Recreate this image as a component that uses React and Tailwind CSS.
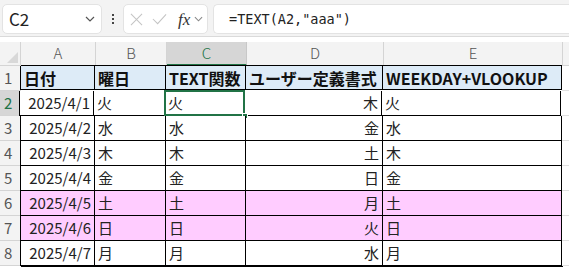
import React from "react";

const cols = [
  { key: "A", w: "w-[75px]" },
  { key: "B", w: "w-[71px]" },
  { key: "C", w: "w-[80px]" },
  { key: "D", w: "w-[137px]" },
  { key: "E", w: "w-[179px]" },
];

const rows = [
  { n: 2, a: "2025/4/1", b: "火", c: "火", d: "木", e: "火" },
  { n: 3, a: "2025/4/2", b: "水", c: "水", d: "金", e: "水" },
  { n: 4, a: "2025/4/3", b: "木", c: "木", d: "土", e: "木" },
  { n: 5, a: "2025/4/4", b: "金", c: "金", d: "日", e: "金" },
  { n: 6, a: "2025/4/5", b: "土", c: "土", d: "月", e: "土", pink: true },
  { n: 7, a: "2025/4/6", b: "日", c: "日", d: "火", e: "日", pink: true },
  { n: 8, a: "2025/4/7", b: "月", c: "月", d: "水", e: "月" },
];

const Chevron = ({ className }) => (
  <svg viewBox="0 0 10 6" className={className} fill="none" stroke="currentColor" strokeWidth="1.2">
    <path d="M1 1l4 4 4-4" />
  </svg>
);

const Toolbar = () => (
  <div className="flex h-[37px] items-start gap-0 bg-[#f3f3f3] border-b border-[#dadada] pt-[4px] pl-[2px]">
    <div className="flex h-[30px] w-[100px] items-center justify-between rounded-[5px] border border-[#e3e3e3] bg-white pl-[6px] pr-[6px]">
      <span className="text-[17px] text-[#222]">C2</span>
      <Chevron className="w-[10px] h-[6px] text-[#555]" />
    </div>
    <div className="flex w-[21px] h-[30px] flex-col items-center justify-center gap-[2px]">
      <span className="block w-[2px] h-[2px] bg-[#444]" />
      <span className="block w-[2px] h-[2px] bg-[#444]" />
      <span className="block w-[2px] h-[2px] bg-[#444]" />
    </div>
    <div className="flex h-[30px] w-[85px] items-center rounded-[5px] border border-[#e3e3e3] bg-white pl-[6px]">
      <svg viewBox="0 0 14 14" className="w-[13px] h-[13px] text-[#c4c4c4]" fill="none" stroke="currentColor" strokeWidth="1.1">
        <path d="M1 1l12 12M13 1L1 13" />
      </svg>
      <svg viewBox="0 0 16 12" className="ml-[9px] w-[15px] h-[12px] text-[#c4c4c4]" fill="none" stroke="currentColor" strokeWidth="1.1">
        <path d="M1 6l5 5L15 1" />
      </svg>
      <span className="ml-[11px] text-[17px] italic text-[#333] leading-none" style={{ fontFamily: '"Liberation Serif", serif' }}>
        fx
      </span>
      <Chevron className="ml-[4px] w-[9px] h-[6px] text-[#888]" />
    </div>
    <div className="ml-[5px] flex h-[30px] flex-1 items-center rounded-l-[5px] border border-r-0 border-[#e3e3e3] bg-white pl-[15px]">
      <span className="text-[13.5px] text-[#222]" style={{ fontFamily: '"DejaVu Sans Mono", monospace' }}>
        =TEXT(A2,"aaa")
      </span>
    </div>
  </div>
);

const Cell = ({ w, children, className = "" }) => (
  <div className={`${w} h-full shrink-0 border-r border-b border-black flex items-center px-[3px] ${className}`}>
    {children}
  </div>
);

const headCls = "bg-[#ddebf7] font-bold text-[16px] text-[#111]";

export default function App() {
  return (
    <div
      className="w-[569px] h-[270px] overflow-hidden bg-white"
      style={{ fontFamily: '"Noto Sans CJK JP", "Noto Sans", sans-serif' }}
    >
      <Toolbar />
      <div className="h-[5px]" />
      {/* column headers */}
      <div className="flex h-[24px]">
        <div className="relative w-[21px] shrink-0 bg-[#f3f3f3] border-r border-b border-[#d4d4d4]">
          <svg viewBox="0 0 10 10" className="absolute right-[2px] bottom-[2px] w-[11px] h-[11px]">
            <path d="M10 0L10 10L0 10Z" fill="#d8d8d8" />
          </svg>
        </div>
        {cols.map((c) => (
          <div
            key={c.key}
            className={`${c.w} shrink-0 flex items-center justify-center text-[15px] font-light ${
              c.key === "C"
                ? "bg-[#d6d6d6] text-[#217346] border-b-2 border-[#217346] border-r border-r-[#c8c8c8]"
                : "bg-[#f3f3f3] text-[#555] border-b border-r border-[#d4d4d4]"
            }`}
          >
            {c.key}
          </div>
        ))}
        <div className="flex-1 bg-[#f3f3f3] border-b border-[#d4d4d4]" />
      </div>
      {/* row 1 */}
      <div className="flex h-[25px]">
        <div className="w-[21px] shrink-0 bg-[#f3f3f3] border-r border-b border-[#d4d4d4] text-[15px] text-[#555] pl-[4px] flex items-center">
          1
        </div>
        <div className="flex h-full border-t border-black -mt-px">
          <Cell w="w-[75px] border-l border-l-black -ml-px" className={headCls}>日付</Cell>
          <Cell w="w-[71px]" className={headCls}>曜日</Cell>
          <Cell w="w-[80px]" className={headCls}>TEXT関数</Cell>
          <Cell w="w-[137px]" className={`${headCls} px-[2px]`}>ユーザー定義書式</Cell>
          <Cell w="w-[179px]" className={headCls}>WEEKDAY+VLOOKUP</Cell>
        </div>
        <div className="flex-1 border-b border-[#e0e0e0]" />
      </div>
      {rows.map((r) => {
        const bg = r.pink ? "bg-[#ffccff]" : "bg-white";
        const sel = r.n === 2;
        return (
          <div key={r.n} className="flex h-[25px]">
            <div
              className={`w-[21px] shrink-0 text-[15px] pl-[4px] flex items-center border-b border-[#d4d4d4] ${
                sel
                  ? "bg-[#d6d6d6] text-[#217346] border-r-2 border-r-[#217346]"
                  : "bg-[#f3f3f3] text-[#555] border-r border-r-[#d4d4d4]"
              }`}
            >
              {r.n}
            </div>
            <div className="flex h-full text-[15px] text-[#222]">
              <Cell w={`w-[75px] border-l border-l-black ${sel ? "-ml-[2px]" : "-ml-px"}`} className={`${bg} justify-end`}>
                {r.a}
              </Cell>
              <Cell w="w-[71px]" className={bg}>{r.b}</Cell>
              <Cell w="w-[80px]" className={`${bg} relative`}>
                {r.c}
                {sel && (
                  <>
                    <div className="absolute -left-px -top-px right-[-1px] bottom-[-1px] border-2 border-[#217346]" />
                    <div className="absolute right-[-4px] bottom-[-4px] w-[6px] h-[6px] bg-[#217346] border border-white" />
                  </>
                )}
              </Cell>
              <Cell w="w-[137px]" className={`${bg} justify-end`}>{r.d}</Cell>
              <Cell w="w-[179px]" className={bg}>{r.e}</Cell>
            </div>
            <div className="flex-1 border-b border-[#e0e0e0]" />
          </div>
        );
      })}
      <div className="flex h-[4px] border-t border-black ml-[21px] w-[542px]" />
    </div>
  );
}
